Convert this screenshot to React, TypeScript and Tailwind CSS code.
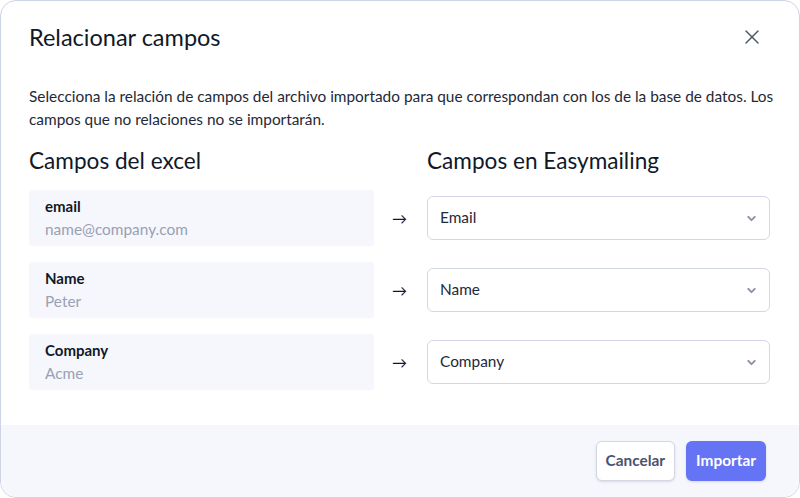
import { X, ChevronDown } from 'lucide-react'

const rows = [
  { campo: 'email', ejemplo: 'name@company.com', destino: 'Email' },
  { campo: 'Name', ejemplo: 'Peter', destino: 'Name' },
  { campo: 'Company', ejemplo: 'Acme', destino: 'Company' },
]

export default function App() {
  return (
    <div className="h-[498px] w-[800px] bg-white" style={{ fontFamily: 'Lato, "Noto Sans", sans-serif' }}>
      <div className="flex h-full flex-col overflow-hidden rounded-[16px] border border-[#cfd3e6] bg-white">
        <div className="flex items-center justify-between pl-[28px] pr-[35px] pt-[20px]">
          <h2 className="text-[23.5px] leading-[32px] text-[#111827]">Relacionar campos</h2>
          <button className="text-[#4b5563]" title="Cerrar">
            <X size={24} strokeWidth={1.4} />
          </button>
        </div>

        <p className="mt-[32px] pl-[28px] pr-[16px] text-[15.4px] leading-[23px] text-[#1f2937]">
          Selecciona la relación de campos del archivo importado para que correspondan con los de la base de datos. Los campos que no relaciones no se importarán.
        </p>

        <div className="mt-[14px] grid grid-cols-[345px_53px_1fr] px-[28px] pr-[29px]">
          <h3 className="text-[22.6px] leading-[32px] text-[#111827]">Campos del excel</h3>
          <span />
          <h3 className="text-[22.6px] leading-[32px] text-[#111827]">Campos en Easymailing</h3>
        </div>

        <div className="mt-[13px] flex flex-col gap-[16px] px-[28px] pr-[29px]">
          {rows.map((r) => (
            <div key={r.campo} className="grid grid-cols-[345px_53px_1fr] items-center">
              <div className="h-[56px] rounded-[3px] bg-[#f6f7fc] px-[16px] pt-[5px]">
                <div className="text-[15px] font-bold leading-[22px] text-[#111827]">{r.campo}</div>
                <div className="text-[15.4px] leading-[24px] text-[#9aa0b4]">{r.ejemplo}</div>
              </div>
              <div className="pl-[18px] text-[15px] text-[#111827]">→</div>
              <div className="flex h-[44px] items-center justify-between rounded-[6px] border border-[#d3d7e6] bg-white pl-[12px] pr-[11px]">
                <span className="text-[15.4px] text-[#1f2937]">{r.destino}</span>
                <ChevronDown size={13} strokeWidth={3.5} className="text-[#8a90a6]" />
              </div>
            </div>
          ))}
        </div>

        <div className="mt-auto flex h-[72px] items-center justify-end gap-[11px] bg-[#f6f7fc] pr-[33px]">
          <button className="h-[40px] rounded-[6px] border border-[#d3d7e6] bg-white px-[9px] text-[15.4px] font-bold text-[#4b5270] shadow-sm">
            Cancelar
          </button>
          <button className="h-[40px] rounded-[6px] bg-[#6474f4] px-[10px] text-[15.4px] font-bold text-white shadow-sm">
            Importar
          </button>
        </div>
      </div>
    </div>
  )
}
